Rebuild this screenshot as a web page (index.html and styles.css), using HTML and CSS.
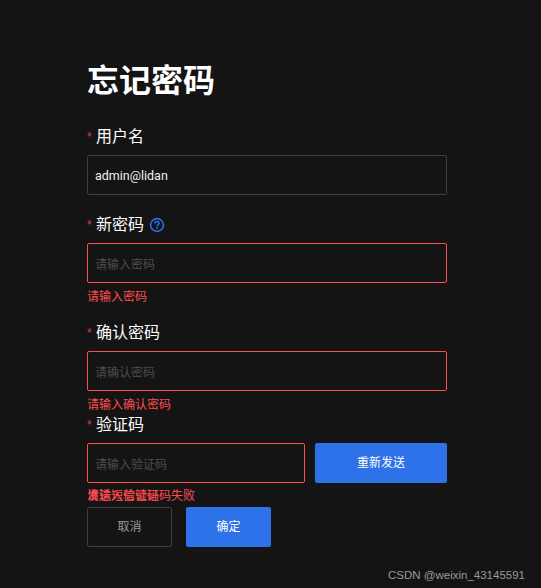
FILE: index.html
```html
<!doctype html>
<html>
<head>
	<title>忘记密码</title>
	<link rel="stylesheet" href="styles.css">
</head>
<body>
	<form class="forget" method="GET" action="">
		<h1>忘记密码</h1>

		<div class="item item-name">
			<label for="username"><i>*</i>用户名</label>
			<input type="text" id="username" value="admin@lidan" />
		</div>

		<div class="item item-pwd">
			<label for="pwd"><i>*</i>新密码
				<svg class="help" width="16" height="16" viewBox="0 0 16 16" fill="none">
					<circle cx="8" cy="8" r="6.4" stroke="#2a6fe8" stroke-width="1.6"/>
					<path d="M5.9 6.4C5.9 5.1 6.9 4.4 8 4.4S10.1 5.2 10.1 6.3C10.1 7.6 8 7.8 8 9.4" stroke="#2a6fe8" stroke-width="1.5"/>
					<rect x="7.2" y="10.3" width="1.6" height="1.6" fill="#2a6fe8"/>
				</svg>
			</label>
			<input type="text" id="pwd" class="wrong" placeholder="请输入密码" />
			<p class="err">请输入密码</p>
		</div>

		<div class="item item-confirm">
			<label for="confirm"><i>*</i>确认密码</label>
			<input type="text" id="confirm" class="wrong" placeholder="请确认密码" />
			<p class="err">请输入确认密码</p>
		</div>

		<div class="item item-code">
			<label for="code"><i>*</i>验证码</label>
			<div class="code-row">
				<input type="text" id="code" class="wrong" placeholder="请输入验证码" />
				<button type="button" class="btn primary resend">重新发送</button>
			</div>
			<p class="err">发送短信验证码失败<span class="err-over">请输入验证码</span></p>
		</div>

		<div class="actions">
			<button type="button" class="btn cancel">取消</button>
			<button type="button" class="btn primary">确定</button>
		</div>
	</form>
	<div class="mark">CSDN @weixin_43145591</div>
</body>
</html>
```

FILE: styles.css
```css
*{
	margin:0;
	padding:0;
	box-sizing:border-box;
}
html,body{
	height:588px;
	overflow:hidden;
}
body{
	position:relative;
	background:#141414;
	font-family:"Noto Sans CJK SC","Liberation Sans",sans-serif;
}
.forget{
	width:360px;
	margin-left:87px;
	padding-top:58px;
}
h1{
	height:44px;
	line-height:40px;
	font-size:32px;
	font-weight:700;
	color:#fff;
	margin-bottom:23px;
}
.item label{
	display:flex;
	align-items:center;
	height:22px;
	padding-bottom:2px;
	line-height:20px;
	font-size:16px;
	color:#fff;
	margin-bottom:8px;
}
.item label i{
	width:9px;
	margin-top:4px;
	font-style:normal;
	font-size:12px;
	color:#e03a3a;
	font-family:"Liberation Sans",sans-serif;
}
.help{
	margin-left:5px;
	margin-top:4px;
}
input{
	display:block;
	width:100%;
	height:40px;
	padding:0 7px;
	background:transparent;
	border:1px solid #3e3e3e;
	border-radius:2px;
	outline:none;
	font-family:Roboto,"Noto Sans CJK SC",sans-serif;
	font-size:12.5px;
	color:#f0f0f0;
}
input::placeholder{
	font-size:12px;
	color:#4d4d4d;
}
input.wrong{
	border-color:#ff4d4f;
	padding-top:2px;
}
.err{
	position:relative;
	height:20px;
	line-height:20px;
	margin-top:3px;
	font-size:12px;
	color:#ff4d4f;
}
.err-over{
	position:absolute;
	left:0;
	top:0;
}
.item-name{
	margin-bottom:18px;
}
.item-pwd{
	margin-bottom:15px;
}
.item-confirm{
	margin-bottom:-1px;
}
.item-code .err{
	margin-top:2px;
	margin-bottom:2px;
}
.code-row{
	display:flex;
	gap:10px;
}
.code-row input{
	width:218px;
}
.btn{
	width:85px;
	height:40px;
	padding-bottom:3px;
	border:1px solid #3e3e3e;
	border-radius:2px;
	background:transparent;
	font-family:"Noto Sans CJK SC","Liberation Sans",sans-serif;
	font-size:12px;
	color:#9a9a9a;
}
.btn.primary{
	background:#2e72ea;
	border-color:#2e72ea;
	color:#fff;
}
.resend{
	width:132px;
}
.actions{
	display:flex;
	gap:14px;
}
.mark{
	position:absolute;
	right:16px;
	bottom:7px;
	font-family:"Liberation Sans",sans-serif;
	font-size:11.5px;
	color:#9a9a9a;
}
```
